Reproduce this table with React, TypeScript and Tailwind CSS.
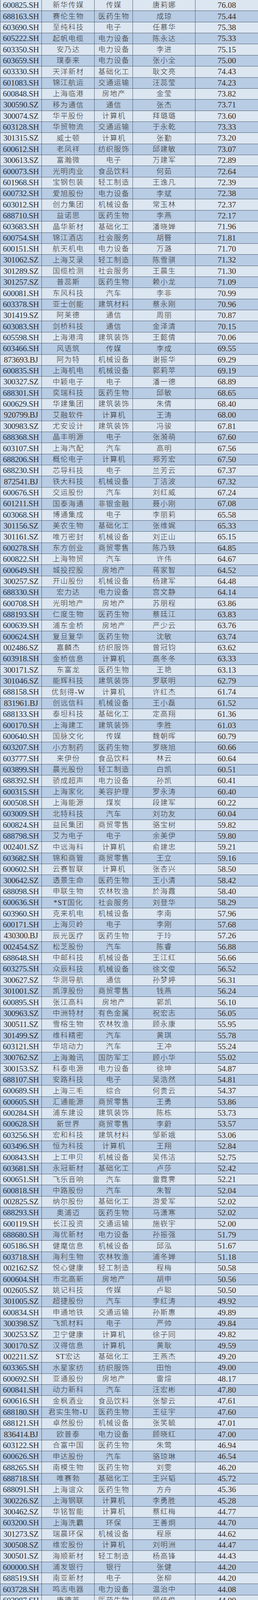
import React from "react";

const RAW = `600825.SH 新华传媒 传媒 唐莉娜 76.08
688163.SH 赛伦生物 医药生物 成琼 75.44
603690.SH 至纯科技 电子 任慕华 75.38
605222.SH 起帆电缆 电力设备 陈永达 75.33
603350.SH 安乃达 电力设备 李进 75.15
603659.SH 璞泰来 电力设备 张小全 75.00
603330.SH 天洋新材 基础化工 耿文亮 74.43
601083.SH 锦江航运 交通运输 汪蕊莹 74.23
600848.SH 上海临港 房地产 金莹 73.82
300590.SZ 移为通信 通信 张杰 73.71
300074.SZ 华平股份 计算机 拜璐璐 73.60
603128.SH 华贸物流 交通运输 于永乾 73.33
301315.SZ 威士顿 计算机 张勤 73.20
600612.SH 老凤祥 纺织服饰 邱建敏 73.07
300613.SZ 富瀚微 电子 万建军 72.89
600073.SH 光明肉业 食品饮料 何茹 72.64
601968.SH 宝钢包装 轻工制造 王逸凡 72.39
600732.SH 爱旭股份 电力设备 李斌 72.38
603012.SH 创力集团 机械设备 常玉林 72.37
688710.SH 益诺思 医药生物 李燕 72.17
603683.SH 晶华新材 基础化工 潘晓婵 71.96
600754.SH 锦江酒店 社会服务 胡暋 71.81
600151.SH 航天机电 电力设备 万潞 71.70
301062.SZ 上海艾录 轻工制造 陈雪骐 71.32
301289.SZ 国缆检测 社会服务 王晨生 71.30
301257.SZ 普蕊斯 医药生物 赖小龙 71.09
600081.SH 东风科技 汽车 李非 70.99
603378.SH 亚士创能 建筑材料 蔡永刚 70.96
301419.SZ 阿莱德 通信 周丽 70.87
603083.SH 剑桥科技 通信 金泽清 70.15
605598.SH 上海港湾 建筑装饰 王懿倩 70.06
603466.SH 风语筑 传媒 李成 69.55
873693.BJ 阿为特 机械设备 谢振华 69.29
600835.SH 上海机电 机械设备 郭莉苹 69.19
300327.SZ 中颖电子 电子 潘一德 68.89
688301.SH 奕瑞科技 医药生物 邱敏 68.65
600629.SH 华建集团 建筑装饰 朱倩 68.40
920799.BJ 艾融软件 计算机 王涛 68.00
300983.SZ 尤安设计 建筑装饰 冯骏 67.81
688368.SH 晶丰明源 电子 张漪萌 67.60
603107.SH 上海汽配 汽车 高明 67.56
688206.SH 概伦电子 计算机 郑芳宏 67.50
688230.SH 芯导科技 电子 兰芳云 67.37
872541.BJ 铁大科技 机械设备 丁洁波 67.32
600676.SH 交运股份 汽车 刘红威 67.24
601211.SH 国泰海通 非银金融 聂小刚 67.08
603068.SH 博通集成 电子 李丽莉 65.58
301156.SZ 美农生物 基础化工 张维娓 65.33
301161.SZ 唯万密封 机械设备 刘正山 65.15
600278.SH 东方创业 商贸零售 陈乃轶 64.85
600822.SH 上海物贸 汽车 许伟 64.67
600649.SH 城投控股 房地产 蒋家智 64.52
300257.SZ 开山股份 机械设备 杨建军 64.48
688330.SH 宏力达 电力设备 宫文静 64.14
600708.SH 光明地产 房地产 苏朋程 63.86
688193.SH 仁度生物 医药生物 蔡廷江 63.83
600639.SH 浦东金桥 房地产 严少云 63.76
600624.SH 复旦复华 医药生物 沈敏 63.74
002486.SZ 嘉麟杰 纺织服饰 曾冠钧 63.62
603918.SH 金桥信息 计算机 高冬冬 63.33
300171.SZ 东富龙 医药生物 王艳 63.13
301046.SZ 能辉科技 建筑装饰 罗联明 62.79
688158.SH 优刻得-W 计算机 许红杰 61.74
831961.BJ 创远信科 机械设备 王小磊 61.52
688133.SH 泰坦科技 基础化工 定高翔 61.36
600170.SH 上海建工 建筑装饰 李胜 61.03
600640.SH 国脉文化 传媒 魏朝晖 60.79
603207.SH 小方制药 医药生物 罗晓旭 60.66
603777.SH 来伊份 食品饮料 林云 60.64
603899.SH 晨光股份 轻工制造 白凯 60.51
688392.SH 骄成超声 电力设备 孙凯 60.41
600315.SH 上海家化 美容护理 罗永涛 60.40
600508.SH 上海能源 煤炭 段建军 60.22
603009.SH 北特科技 汽车 刘功友 60.04
600824.SH 益民集团 商贸零售 骆宝树 59.82
688798.SH 艾为电子 电子 余美伊 59.80
002401.SZ 中远海科 计算机 俞建忠 59.21
603682.SH 锦和商管 商贸零售 王立 59.16
600602.SH 云赛智联 计算机 张杏兴 58.50
300642.SZ 透景生命 医药生物 王小清 58.42
688098.SH 申联生物 农林牧渔 於海霞 58.40
600636.SH *ST国化 社会服务 刘登华 58.29
603960.SH 克来机电 机械设备 李南 57.96
600171.SH 上海贝岭 电子 李刚 57.68
430300.BJ 辰光医疗 医药生物 于玲 57.26
002454.SZ 松芝股份 汽车 陈睿 56.88
688648.SH 中邮科技 机械设备 王江红 56.66
603275.SH 众辰科技 机械设备 徐文俊 56.52
300627.SZ 华测导航 通信 孙梦婷 56.31
301001.SZ 凯淳股份 商贸零售 钱燕 56.24
600895.SH 张江高科 房地产 郭凯 56.10
300963.SZ 中洲特材 有色金属 祝宏志 56.05
300511.SZ 雪榕生物 农林牧渔 顾永康 55.95
301499.SZ 维科精密 汽车 黄琪 55.78
603121.SH 华培动力 汽车 王冲 55.24
300762.SZ 上海瀚讯 国防军工 顾小华 55.02
300153.SZ 科泰电源 电力设备 徐坤 54.87
688107.SH 安路科技 电子 吴浩然 54.81
600689.SH 上海三毛 综合 何贵云 54.37
600605.SH 汇通能源 商贸零售 王勇 53.86
600284.SH 浦东建设 建筑装饰 陈栋 53.73
600628.SH 新世界 商贸零售 李蔚 53.57
603256.SH 宏和科技 建筑材料 邹新娥 53.06
603496.SH 恒为科技 计算机 王翔 52.84
600843.SH 上工申贝 机械设备 吴伟洁 52.75
603681.SH 永冠新材 基础化工 卢莎 52.42
600651.SH 飞乐音响 汽车 雷霓霁 52.21
600818.SH 中路股份 汽车 朱智 52.04
002825.SZ 纳尔股份 基础化工 游爱军 52.02
688293.SH 奥浦迈 医药生物 马潇寒 52.02
600119.SH 长江投资 交通运输 施嵚宇 52.00
688680.SH 海优新材 电力设备 孙振强 51.79
605186.SH 健麾信息 机械设备 邱泓 51.67
603718.SH 海利生物 农林牧渔 浦冬婵 51.18
002162.SZ 悦心健康 轻工制造 程梅 50.58
600604.SH 市北高新 房地产 胡申 50.56
002605.SZ 姚记科技 传媒 卢聪 50.50
301005.SZ 超捷股份 汽车 李红涛 49.92
600834.SH 申通地铁 交通运输 孙斯惠 49.89
300398.SZ 飞凯材料 电子 严帅 49.84
300253.SZ 卫宁健康 计算机 徐子同 49.82
300170.SZ 汉得信息 计算机 黄耿 49.59
002211.SZ ST宏达 基础化工 王燕杰 49.20
603365.SH 水星家纺 纺织服饰 田怡 49.00
600692.SH 亚通股份 房地产 雷煊 48.17
600841.SH 动力新科 汽车 汪宏彬 47.80
600616.SH 金枫酒业 食品饮料 张黎云 47.61
688180.SH 君实生物-U 医药生物 王征宇 47.60
688121.SH 卓然股份 机械设备 张笑毓 47.01
836414.BJ 欧普泰 电力设备 顾晓红 47.00
603122.SH 合富中国 医药生物 朱莺 46.94
600626.SH 申达股份 汽车 骆琼琳 46.54
688265.SH 南模生物 医药生物 刘雯 46.20
688718.SH 唯赛勃 基础化工 王兴韬 45.72
688091.SH 上海谊众 医药生物 方舟 45.36
300226.SZ 上海钢联 计算机 李勇胜 45.28
300462.SZ 华铭智能 计算机 蔡红梅 44.77
603200.SH 上海洗霸 环保 王善炯 44.70
301273.SZ 瑞晨环保 机械设备 程原 44.62
300508.SZ 维宏股份 计算机 刘明洲 44.47
300501.SZ 海顺新材 轻工制造 杨高锋 44.43
600000.SH 浦发银行 银行 张健 44.20
688519.SH 南亚新材 电子 张柳 44.20
603728.SH 鸣志电器 电力设备 温治中 44.08
603987.SH 康德莱 医药生物 顾佳俊 44.00
688179.SH 阿拉丁 基础化工 赵新安 43.88
603131.SH 上海沪工 机械设备 赵鹏 43.18
600094.SH 大名城 房地产 张燕琦 43.10
002278.SZ 神开股份 机械设备 王振飞 42.45
600613.SH 神奇制药 医药生物 吴克兢 41.53
688129.SH 东来技术 基础化工 邹金彤 41.22
300802.SZ 矩子科技 机械设备 刘阳 40.54
600530.SH 交大昂立 食品饮料 葛欣颖 40.32
002669.SZ 康达新材 基础化工 沈一涛 40.00
301025.SZ 读客文化 传媒 刘保瑞 40.00
603226.SH 菲林格尔 轻工制造 胡忠青 40.00
605289.SH 罗曼股份 建筑装饰 张政宇 39.81
688160.SH 步科股份 机械设备 刘耘 39.22
688435.SH 英方软件 计算机 沈蔡娟 38.84
603039.SH 泛微网络 计算机 周琳 38.46
603886.SH 元祖股份 食品饮料 周丹丹 38.30
002178.SZ 延华智能 计算机 王垒宏 37.81
600420.SH 国药现代 医药生物 张忠喜 37.71
600679.SH 上海凤凰 汽车 朱鹏程 36.27
688585.SH 上纬新材 基础化工 李姵仪 36.05
002451.SZ 摩恩电气 电力设备 黄圣植 36.00
603189.SH 网达软件 计算机 孙琳 36.00
603895.SH 天永智能 机械设备 吕爱华 35.63
603022.SH 新通联 轻工制造 徐宏菁 34.86`;

const rows = RAW.split("\n").map((l) => l.trim().split(/\s+/));

const FONT = { fontFamily: '"Liberation Serif", "Noto Sans CJK SC", serif' };

function Row({ r, dark }: { r: string[]; dark: boolean }) {
  return (
    <div
      className={
        dark
          ? "grid min-h-0 flex-1 basis-0 grid-cols-[107px_135px_98px_160px_160px] overflow-hidden border-b border-[#4c5c6e] bg-[#b8cce4]"
          : "grid min-h-0 flex-1 basis-0 grid-cols-[107px_135px_98px_160px_160px] overflow-hidden border-b border-[#4c5c6e] bg-[#dce6f1]"
      }
    >
      <div className="flex min-h-0 items-center justify-center overflow-hidden border-l border-r border-[#4c5c6e] text-[21px] leading-none tracking-[-0.3px]">
        {r[0]}
      </div>
      <div className="flex min-h-0 items-center justify-center overflow-hidden border-r border-[#4c5c6e] pl-[1.5px] text-[18.5px] leading-none tracking-[1.5px] font-light">
        {r[1]}
      </div>
      <div className="flex min-h-0 items-center justify-center overflow-hidden border-r border-[#4c5c6e] pl-[1.5px] text-[18.5px] leading-none tracking-[1.5px] font-light">
        {r[2]}
      </div>
      <div className="flex min-h-0 items-center justify-center overflow-hidden border-r border-[#4c5c6e] pl-[1.5px] text-[18.5px] leading-none tracking-[1.5px] font-light">
        {r[3]}
      </div>
      <div className="flex min-h-0 items-center justify-center overflow-hidden text-[21px] leading-none">
        {r[4]}
      </div>
    </div>
  );
}

export default function App() {
  return (
    <div
      className="flex h-[4793px] w-[660px] flex-col overflow-hidden bg-[#dce6f1] text-[#2e2e2e]"
      style={FONT}
    >
      {rows.map((r, i) => (
        <Row key={i} r={r} dark={i % 2 === 1} />
      ))}
    </div>
  );
}
